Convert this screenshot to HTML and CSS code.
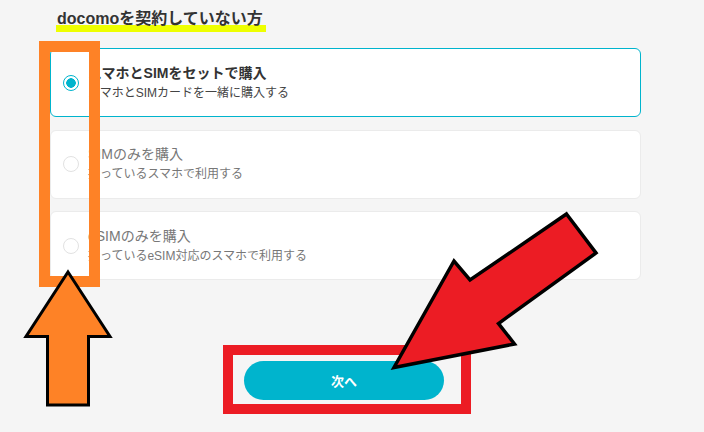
FILE: index.html
```html
<!DOCTYPE html>
<html lang="ja">
<head>
  <meta charset="utf-8">
  <title>購入方法の選択</title>
  <link rel="stylesheet" href="styles.css">
</head>
<body>
<div class="page">
  <section class="plan">
    <h2 class="plan-title"><span>docomoを契約していない方</span></h2>

    <ul class="options">
      <li class="option is-selected">
        <span class="radio"></span>
        <div class="option-text">
          <p class="option-name">スマホとSIMをセットで購入</p>
          <p class="option-desc">スマホとSIMカードを一緒に購入する</p>
        </div>
      </li>
      <li class="option">
        <span class="radio"></span>
        <div class="option-text">
          <p class="option-name">SIMのみを購入</p>
          <p class="option-desc">持っているスマホで利用する</p>
        </div>
      </li>
      <li class="option">
        <span class="radio"></span>
        <div class="option-text">
          <p class="option-name">eSIMのみを購入</p>
          <p class="option-desc">持っているeSIM対応のスマホで利用する</p>
        </div>
      </li>
    </ul>

    <div class="actions">
      <button class="next" type="button">次へ</button>
    </div>
  </section>

  <!-- annotations drawn over the page -->
  <svg class="marks" width="704" height="432" viewBox="0 0 704 432">
    <rect x="44.5" y="46.5" width="50" height="235" fill="none" stroke="#fe8226" stroke-width="11"/>
    <polygon points="68,272 110,336.5 88.5,336.5 88.5,405 47.5,405 47.5,336.5 26,336.5"
             fill="#fe8226" stroke="#000" stroke-width="3" stroke-linejoin="miter"/>
    <rect x="228" y="350" width="238" height="59" fill="none" stroke="#ec1c24" stroke-width="10"/>
    <polygon points="566.5,214 596,253 498.5,323.5 514.5,344 394,367.5 454,261 470,280"
             fill="#ec1c24" stroke="#000" stroke-width="3.5" stroke-linejoin="miter"/>
  </svg>
</div>
</body>
</html>
```

FILE: styles.css
```css
html, body{
  margin:0;
  padding:0;
}

body{
  background:#f5f5f5;
  font-family:"Liberation Sans", "Noto Sans CJK JP", sans-serif;
  color:#333;
}

.page{
  position:relative;
  width:704px;
  height:432px;
  overflow:hidden;
}

.plan{
  width:591px;
  margin-left:50px;
}

.plan-title{
  margin:0;
  padding-top:9px;
  font-size:16px;
  font-weight:bold;
  line-height:20px;
}

.plan-title span{
  display:inline-block;
  margin-left:6px;
  padding:0 3px 3px 1px;
  background:linear-gradient(transparent 16px, #eeff00 16px);
}

.options{
  list-style:none;
  margin:16px 0 0;
  padding:0;
  display:flex;
  flex-direction:column;
  gap:12.5px;
}

.option{
  box-sizing:border-box;
  height:69px;
  display:flex;
  align-items:center;
  gap:9px;
  padding:0 0 0 12px;
  background:#fff;
  border:1px solid #ebebeb;
  border-radius:6px;
}

.option.is-selected{
  border-color:#00b4cd;
}

.radio{
  box-sizing:border-box;
  flex:none;
  width:16px;
  height:16px;
  border:1px solid #e2e2e2;
  border-radius:50%;
}

.is-selected .radio{
  border:1.5px solid #00b4cd;
  background:radial-gradient(circle, #00b4cd 0 4.5px, transparent 5px);
}

.option-text p{
  margin:0;
}

.option-name{
  font-size:14px;
  line-height:20px;
  color:#777;
}

.option-desc{
  margin-top:1px;
  font-size:12px;
  line-height:20px;
  color:#777;
}

.is-selected .option-name{
  color:#333;
  font-weight:bold;
}

.is-selected .option-desc{
  color:#444;
}

.actions{
  margin-top:81px;
}

.next{
  display:block;
  width:200px;
  height:39px;
  margin-left:194px;
  border:0;
  border-radius:20px;
  background:#00b4cd;
  color:#fff;
  font-family:inherit;
  font-size:13px;
  font-weight:bold;
}

.marks{
  position:absolute;
  left:0;
  top:0;
}
```
